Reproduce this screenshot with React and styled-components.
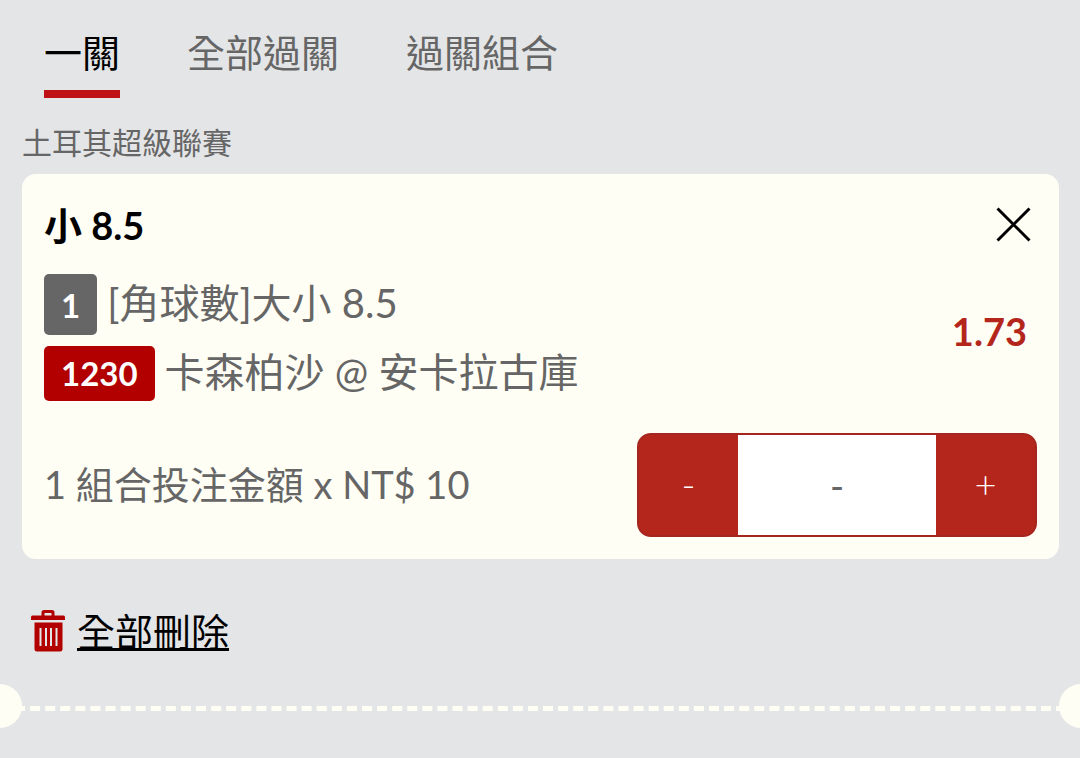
import React, { useState } from 'react';
import styled, { createGlobalStyle } from 'styled-components';

const GlobalStyle = createGlobalStyle`
  * {
    box-sizing: border-box;
  }

  body {
    margin: 0;
    background: #e4e5e7;
    font-family: Lato, "Noto Sans CJK TC", sans-serif;
    font-size: 38px;
    line-height: 48px;
    color: #666;
  }

  button,
  input {
    font: inherit;
  }
`;

const Page = styled.main`
  overflow: hidden;
  padding-bottom: 30px;
`;

const Tabs = styled.nav`
  display: flex;
  gap: 67px;
  padding: 28px 44px 0;
`;

const Tab = styled.button`
  padding: 0 0 14px;
  border: 0;
  border-bottom: 8px solid ${({ $active }) => ($active ? '#bf1216' : 'transparent')};
  background: none;
  color: ${({ $active }) => ($active ? '#000' : '#666')};
  cursor: pointer;
`;

const Content = styled.section`
  padding: 24px 21px 0 22px;
`;

const League = styled.h2`
  margin: 0 0 12px;
  font-size: 30px;
  line-height: 40px;
  font-weight: 400;
`;

const Card = styled.article`
  padding: 22px;
  border-radius: 14px;
  background: #fffef5;
`;

const CardHeader = styled.header`
  display: flex;
  align-items: center;
  justify-content: space-between;
  height: 56px;
`;

const Pick = styled.h3`
  margin: 0;
  padding-top: 2px;
  font-size: 38px;
  font-weight: 700;
  color: #000;
`;

const CloseButton = styled.button`
  display: flex;
  padding: 6px;
  border: 0;
  background: none;
  color: #000;
  cursor: pointer;
`;

const CardBody = styled.div`
  display: flex;
  align-items: center;
  justify-content: space-between;
  margin-top: 22px;
`;

const Lines = styled.div`
  display: flex;
  flex-direction: column;
  gap: 11px;
`;

const Line = styled.div`
  display: flex;
  align-items: center;
  gap: 10px;
`;

const LineText = styled.span`
  padding-bottom: 4px;
  font-size: 40px;
`;

const Badge = styled.span`
  padding: ${({ $tall }) => ($tall ? '7px 17px 6px' : '3px 17px 4px')};
  border-radius: 5px;
  background: ${({ $color }) => $color};
  color: #fff;
  font-size: 33px;
  font-weight: 700;
`;

const Odds = styled.strong`
  padding: 0 10px 14px 0;
  font-weight: 700;
  color: #b4261c;
`;

const StakeRow = styled.div`
  display: flex;
  align-items: center;
  justify-content: space-between;
  margin-top: 32px;
`;

const StakeLabel = styled.label`
  padding-bottom: 2px;
`;

const Stepper = styled.div`
  display: flex;
  width: 400px;
  height: 104px;
  border: 2px solid #a5261e;
  border-radius: 14px;
  background: #b4261c;
  overflow: hidden;
`;

const StepButton = styled.button`
  flex: 1;
  padding: 0 0 4px;
  border: 0;
  background: #b4261c;
  color: #fff;
  font-size: 38px;
  font-weight: 300;
  cursor: pointer;
`;

const Amount = styled.input`
  flex: 2;
  min-width: 0;
  padding: 0;
  border: 0;
  background: #fff;
  color: #666;
  text-align: center;
`;

const Actions = styled.div`
  display: flex;
  padding: 48px 31px 0;
`;

const ClearLink = styled.a`
  display: flex;
  align-items: center;
  gap: 12px;
  color: #000;
  text-decoration: none;
`;

const ClearText = styled.span`
  text-decoration: underline;
  text-decoration-thickness: 3px;
  text-decoration-skip-ink: none;
  text-underline-offset: 2px;
`;

const Perforation = styled.div`
  display: flex;
  margin: 29px -23px 0 -22px;
`;

const Notch = styled.span`
  flex: none;
  width: 44px;
  height: 44px;
  border-radius: 50%;
  background: #fffef5;
`;

const Dashes = styled.div`
  flex: 1;
  margin: 22px -7px 0;
  border-top: 5px dashed #fffef5;
`;

const CloseIcon = () => (
  <svg width="35" height="35" viewBox="0 0 35 35" fill="none" stroke="currentColor" strokeWidth="3" aria-hidden="true">
    <path d="M1.5 1.5 33.5 33.5M33.5 1.5 1.5 33.5" />
  </svg>
);

const TrashIcon = () => (
  <svg width="34" height="42" viewBox="0 0 34 42" fill="#b20000" aria-hidden="true">
    <path
      fillRule="evenodd"
      d="M13 0h8a2.500 2.500 0 0 1 2.500 2.500V5.500H32.500a1.500 1.500 0 0 1 1.500 1.500V10H0V7a1.500 1.500 0 0 1 1.500-1.500H10.500V2.500A2.500 2.500 0 0 1 13 0ZM13.500 3v2.500h7V3Z"
    />
    <path
      fillRule="evenodd"
      d="M3.500 12.500h28v26.500a2.500 2.500 0 0 1-2.500 2.500h-23A2.500 2.500 0 0 1 3.500 39ZM8.500 18v18h2V18ZM14 18v18h2V18ZM19 18v18h2V18ZM24.500 18v18h2V18Z"
    />
  </svg>
);

const TABS = ['一關', '全部過關', '過關組合'];

const App = () => {
  const [active, setActive] = useState(0);
  const [amount, setAmount] = useState('-');

  const step = (by) => {
    const next = (parseInt(amount, 10) || 0) + by;
    setAmount(next > 0 ? String(next) : '-');
  };

  return (
    <Page>
      <GlobalStyle />
      <Tabs>
        {TABS.map((label, i) => (
          <Tab key={label} type="button" $active={i === active} onClick={() => setActive(i)}>
            {label}
          </Tab>
        ))}
      </Tabs>

      <Content>
        <League>土耳其超級聯賽</League>
        <Card>
          <CardHeader>
            <Pick>小 8.5</Pick>
            <CloseButton type="button" aria-label="刪除">
              <CloseIcon />
            </CloseButton>
          </CardHeader>
          <CardBody>
            <Lines>
              <Line>
                <Badge $tall $color="#666">1</Badge>
                <LineText>[角球數]大小 8.5</LineText>
              </Line>
              <Line>
                <Badge $color="#b20000">1230</Badge>
                <LineText>卡森柏沙 @ 安卡拉古庫</LineText>
              </Line>
            </Lines>
            <Odds>1.73</Odds>
          </CardBody>
          <StakeRow>
            <StakeLabel htmlFor="amount">1 組合投注金額 x NT$ 10</StakeLabel>
            <Stepper>
              <StepButton type="button" aria-label="減少" onClick={() => step(-1)}>-</StepButton>
              <Amount id="amount" type="text" value={amount} onChange={(e) => setAmount(e.target.value)} />
              <StepButton type="button" aria-label="增加" onClick={() => step(1)}>+</StepButton>
            </Stepper>
          </StakeRow>
        </Card>
      </Content>

      <Actions>
        <ClearLink href="#">
          <TrashIcon />
          <ClearText>全部刪除</ClearText>
        </ClearLink>
      </Actions>

      <Perforation>
        <Notch />
        <Dashes />
        <Notch />
      </Perforation>
    </Page>
  );
};

export default App;
